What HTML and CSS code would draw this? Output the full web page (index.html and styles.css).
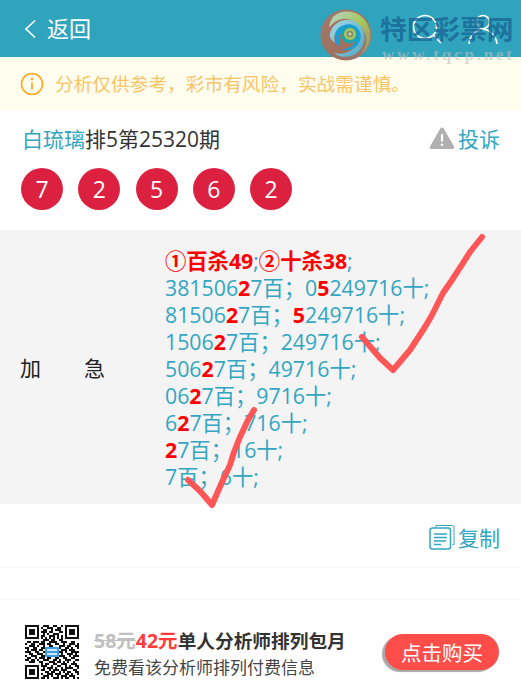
FILE: index.html
```html
<!DOCTYPE html>
<html lang="zh-CN">
<head>
    <meta charset="UTF-8">
    <meta name="viewport" content="width=device-width, initial-scale=1.0">
    <title>排5第25320期</title>
    <link rel="stylesheet" href="styles.css">
</head>
<body>
    <div class="page">
        <header class="top-bar">
            <div class="back">
                <svg class="back-arrow" width="12" height="20" viewBox="0 0 12 20"><path d="M11 1.5 2 10l9 8.5" fill="none" stroke="#fff" stroke-width="1.6"/></svg>
                <span>返回</span>
            </div>
            <div class="top-icons">
                <svg width="32" height="32" viewBox="0 0 32 32"><circle cx="13" cy="13" r="11.5" fill="none" stroke="#fff" stroke-width="1.6"/><path d="M21 21l8 8" stroke="#fff" stroke-width="1.6"/></svg>
                <svg width="32" height="32" viewBox="0 0 32 32"><circle cx="16" cy="8" r="6.5" fill="none" stroke="#fff" stroke-width="1.6"/><path d="M2 30c1-9 7-14 14-15 7 1 13 6 14 15" fill="none" stroke="#fff" stroke-width="1.6"/></svg>
            </div>
        </header>

        <div class="notice">
            <svg width="24" height="24" viewBox="0 0 24 24"><circle cx="12" cy="12" r="10.5" fill="none" stroke="#ffa726" stroke-width="1.6"/><path d="M12 10.5v7" stroke="#ffa726" stroke-width="1.8"/><circle cx="12" cy="7.2" r="1.2" fill="#ffa726"/></svg>
            <span>分析仅供参考，彩市有风险，实战需谨慎。</span>
        </div>

        <section class="issue">
            <div class="issue-head">
                <h1 class="issue-title"><span class="teal">白琉璃</span>排5第25320期</h1>
                <a class="complain">
                    <svg width="26" height="24" viewBox="0 0 26 24"><path d="M13 1.5c.8 0 1.3.4 1.700 1L25 20.500c.7 1.300 0 2.500-1.500 2.500h-21C1 23 .3 21.800 1 20.500L11.300 2.500c.4-.6.9-1 1.700-1z" fill="#b0b0b0"/><path d="M13 8v7.500" stroke="#fff" stroke-width="2.200"/><circle cx="13" cy="18.800" r="1.300" fill="#fff"/></svg>
                    <span>投诉</span>
                </a>
            </div>
            <div class="balls">
                <span class="ball">7</span>
                <span class="ball">2</span>
                <span class="ball">5</span>
                <span class="ball">6</span>
                <span class="ball">2</span>
            </div>
        </section>

        <section class="plan">
            <div class="plan-label"><span>加</span><span>急</span></div>
            <div class="plan-body">
                <p class="kill"><b>①百杀49</b><i>;</i><b>②十杀38</b><i>;</i></p>
                <p>381506<b>2</b>7百；0<b>5</b>249716十;</p>
                <p>81506<b>2</b>7百；<b>5</b>249716十;</p>
                <p>1506<b>2</b>7百；249716十;</p>
                <p>506<b>2</b>7百；49716十;</p>
                <p>06<b>2</b>7百；9716十;</p>
                <p>6<b>2</b>7百；716十;</p>
                <p><b>2</b>7百；16十;</p>
                <p>7百；6十;</p>
            </div>
        </section>

        <div class="copy-row">
            <a class="copy">
                <svg width="26" height="26" viewBox="0 0 26 26" fill="none" stroke="#33a6c2"><path d="M7 3.500V1.500h16.500a1.500 1.500 0 0 1 1.500 1.500v17.500h-1.500" stroke-width="1"/><rect x="1" y="4" width="20.500" height="21" rx="2.500" stroke-width="1.500"/><path d="M5 10h13M5 13.500h13M5 17h12M5 20.500h7" stroke-width="1.700"/></svg>
                <span>复制</span>
            </a>
        </div>

        <div class="gap-row"></div>

        <footer class="promo">
            <svg class="qr" width="54" height="54" viewBox="0 0 27 27">
                <path fill="none" stroke="#111" d="M0 .5h7M20 .5h7M0 1.500h1M6 1.500h1M20 1.500h1M26 1.500h1M0 2.500h1M6 2.500h1M20 2.500h1M26 2.500h1M0 3.500h1M6 3.500h1M20 3.500h1M26 3.500h1M0 4.500h1M6 4.500h1M20 4.500h1M26 4.500h1M0 5.500h1M6 5.500h1M20 5.500h1M26 5.500h1M0 6.500h7M20 6.500h7M0 20.500h7M0 21.500h1M6 21.500h1M0 22.500h1M6 22.500h1M0 23.500h1M6 23.500h1M0 24.500h1M6 24.500h1M0 25.500h1M6 25.500h1M0 26.500h7"/>
                <path fill="#111" d="M2 2h3v3H2zM22 2h3v3h-3zM2 22h3v3H2z"/>
                <path fill="none" stroke="#111" d="M9 .5h3M14 .5h2M18 .5h1M8 1.500h1M11 1.500h3M16 1.500h2M9 2.500h2M13 2.500h1M15 2.500h3M8 3.500h3M12 3.500h2M17 3.500h2M9 4.500h1M11 4.500h1M14 4.500h3M8 5.500h2M12 5.500h3M16 5.500h1M18 5.500h1M8 6.500h1M10 6.500h1M12 6.500h1M14 6.500h1M16 6.500h1M18 6.500h1M9 7.500h3M13 7.500h2M17 7.500h2M1 8.500h2M4 8.500h3M8 8.500h2M12 8.500h4M18 8.500h3M23 8.500h2M0 9.500h1M3 9.500h2M7 9.500h3M11 9.500h2M15 9.500h2M19 9.500h1M22 9.500h3M26 9.500h1M2 10.500h3M6 10.500h1M9 10.500h1M12 10.500h2M17 10.500h3M21 10.500h2M25 10.500h2M0 11.500h2M4 11.500h2M8 11.500h2M17 11.500h1M20 11.500h2M23 11.500h1M26 11.500h1M1 12.500h1M3 12.500h3M7 12.500h2M18 12.500h3M22 12.500h3M0 13.500h3M5 13.500h2M9 13.500h1M17 13.500h2M20 13.500h1M23 13.500h4M2 14.500h2M6 14.500h3M18 14.500h1M21 14.500h3M25 14.500h1M0 15.500h1M3 15.500h3M8 15.500h2M17 15.500h3M22 15.500h1M24 15.500h3M1 16.500h2M5 16.500h1M7 16.500h3M11 16.500h2M15 16.500h2M19 16.500h2M23 16.500h2M0 17.500h2M3 17.500h2M6 17.500h1M9 17.500h3M14 17.500h2M17 17.500h1M20 17.500h3M25 17.500h2M2 18.500h3M7 18.500h2M12 18.500h3M16 18.500h2M19 18.500h1M21 18.500h1M24 18.500h1M8 19.500h1M10 19.500h2M14 19.500h2M18 19.500h3M23 19.500h3M8 20.500h3M13 20.500h1M16 20.500h2M20 20.500h1M22 20.500h1M25 20.500h2M9 21.500h1M11 21.500h3M15 21.500h1M18 21.500h1M20 21.500h4M26 21.500h1M8 22.500h2M12 22.500h1M14 22.500h3M18 22.500h3M24 22.500h2M10 23.500h2M13 23.500h2M17 23.500h1M19 23.500h1M21 23.500h2M25 23.500h2M8 24.500h1M11 24.500h3M15 24.500h3M20 24.500h2M23 24.500h1M26 24.500h1M9 25.500h3M13 25.500h1M16 25.500h1M18 25.500h3M22 25.500h3M8 26.500h2M11 26.500h1M14 26.500h3M18 26.500h1M20 26.500h2M24 26.500h1M26 26.500h1"/>
                <rect x="10" y="11" width="7" height="5" rx=".6" fill="#3a9fe0"/>
                <path d="M11 12.500h5M11 14.500h5" stroke="#fff" stroke-width=".7"/>
            </svg>
            <div class="promo-text">
                <div class="promo-title"><s>58元</s><em>42元</em>单人分析师排列包月</div>
                <div class="promo-sub">免费看该分析师排列付费信息</div>
            </div>
            <button class="buy" type="button">点击购买</button>
        </footer>
    </div>

    <!-- watermark laid over the header -->
    <div class="watermark">
        <svg class="wm-logo" width="52" height="52" viewBox="0 0 52 52">
            <defs>
                <linearGradient id="wmOuter" x1="0" y1="0" x2="1" y2="1">
                    <stop offset="0" stop-color="#a3786a"/>
                    <stop offset=".6" stop-color="#a0705e"/>
                    <stop offset="1" stop-color="#8f7d80"/>
                </linearGradient>
                <linearGradient id="wmGreen" x1="0" y1="0" x2="1" y2="1">
                    <stop offset="0" stop-color="#b7d4cf"/>
                    <stop offset=".5" stop-color="#a6c95a"/>
                    <stop offset="1" stop-color="#9c8a70"/>
                </linearGradient>
                <linearGradient id="wmBlue" x1="0" y1="0" x2="1" y2="1">
                    <stop offset="0" stop-color="#a4d6e2"/>
                    <stop offset="1" stop-color="#4fa9c8"/>
                </linearGradient>
            </defs>
            <circle cx="26" cy="26" r="25.500" fill="url(#wmOuter)"/>
            <path d="M13 8C25-3 46 3 50 22c2 11-3 20-10 24 4-5 7-11 6-18C44 17 33 8 22 10 17 11 12 14 9 19c0-4 2-8 4-11z" fill="url(#wmGreen)"/>
            <path d="M10 24C13 14 24 8 34 12c9 4 12 13 10 21-2 7-7 12-13 14-7 2-14 0-17-3 7 2 16 0 21-6 5-7 4-15-2-19-7-4-15-1-18 6-1 3-1 6 0 9-4-3-6-6-5-10z" fill="url(#wmBlue)"/>
            <path d="M18 37c-5-6-4-15 2-19 7-5 17-3 20 5 2 6 0 12-6 16-4 2-8 3-12 1 7 0 14-4 14-11 0-6-5-10-10-8-5 1-8 7-6 12 0 2-1 3-2 4z" fill="#1a9fd4"/>
            <circle cx="29.500" cy="26" r="8.500" fill="#1ea3a8"/>
            <circle cx="30" cy="25" r="6" fill="#a9c265"/>
            <circle cx="30" cy="25" r="3.300" fill="#7f8f6c"/>
            <circle cx="30" cy="25" r="1.500" fill="#d4d6a0"/>
        </svg>
        <div class="wm-text">
            <div class="wm-name">特区彩票网</div>
            <div class="wm-url">www.tqcp.net</div>
        </div>
    </div>

    <!-- hand drawn ticks over the plan text -->
    <svg class="ticks" width="521" height="689" viewBox="0 0 521 689" fill="none" stroke="#ff5757" stroke-width="6" stroke-linecap="round" stroke-linejoin="round">
        <path d="M482 237 470 252 463 263 452 280 443 293 432 315 425 327 410 350 393 370 380 358 362 337"/>
        <path d="M254 410 248 420 240 437 234 452 230 465 222 482 212 505 200 491 188 480"/>
    </svg>
</body>
</html>
```

FILE: styles.css
```css
* {
    box-sizing: border-box;
}

body {
    margin: 0;
    padding: 0;
    background: #ffffff;
    font-family: "Open Sans", "Noto Sans CJK SC", sans-serif;
    color: #333333;
}

.page {
    width: 521px;
    height: 689px;
    overflow: hidden;
}

.top-bar {
    display: flex;
    justify-content: space-between;
    align-items: center;
    height: 57px;
    padding: 0 22px 0 24px;
    background: #30a4bd;
    color: #ffffff;
}

.back {
    display: flex;
    align-items: center;
    gap: 11px;
    font-size: 22px;
}

.back span {
    margin-top: -3px;
}

.top-icons {
    display: flex;
    gap: 23px;
    margin-top: 2px;
}

.notice {
    display: flex;
    align-items: center;
    gap: 11px;
    height: 53px;
    padding-left: 20px;
    background: #fffdee;
    color: #f8c468;
    font-size: 18.700px;
}

.notice span {
    margin-top: -2px;
}

.issue {
    height: 120px;
    padding: 13px 21px 0;
}

.issue-head {
    display: flex;
    justify-content: space-between;
    align-items: center;
    height: 30px;
}

.issue-title {
    margin: 0 0 0 1px;
    font-size: 21px;
    font-weight: 400;
    color: #333333;
}

.teal {
    color: #33a6c2;
}

.complain {
    display: flex;
    align-items: center;
    gap: 3px;
    color: #33a6c2;
    font-size: 21px;
}

.balls {
    display: flex;
    gap: 15.300px;
    margin-top: 15px;
}

.ball {
    display: flex;
    justify-content: center;
    align-items: center;
    width: 42px;
    height: 42px;
    border-radius: 50%;
    background: #dc2140;
    color: #ffffff;
    font-size: 23px;
}

.plan {
    display: flex;
    align-items: center;
    height: 274px;
    background: #f4f4f4;
}

.plan-label {
    display: flex;
    justify-content: space-between;
    width: 85px;
    margin-left: 20px;
    font-size: 21px;
    color: #222222;
}

.plan-body {
    margin-left: 60px;
    padding-top: 2px;
    color: #33a6c2;
    font-size: 21.300px;
    line-height: 27px;
}

.plan-body p {
    margin: 0;
    white-space: nowrap;
}

.plan-body b {
    color: #ff0000;
    font-weight: 700;
}

.plan-body i {
    font-style: normal;
}

.copy-row {
    display: flex;
    justify-content: flex-end;
    align-items: center;
    height: 64px;
    padding-right: 21px;
    border-bottom: 1px solid #f8f8f8;
}

.copy {
    display: flex;
    align-items: center;
    gap: 3px;
    margin-top: 2px;
    color: #33a6c2;
    font-size: 21px;
}

.gap-row {
    height: 32px;
    border-bottom: 1px solid #f8f8f8;
}

.promo {
    display: flex;
    align-items: flex-start;
    padding: 25px 21px 0 25px;
}

.qr {
    flex: none;
}

.promo-text {
    width: 292px;
    margin: 2px 0 0 15px;
}

.promo-title {
    font-size: 18.700px;
    font-weight: 700;
    line-height: 27px;
    white-space: nowrap;
}

.promo-title s {
    font-size: 19.500px;
    color: #c0c0c0;
}

.promo-title em {
    font-size: 19.500px;
    color: #ff3b3b;
    font-style: normal;
}

.promo-sub {
    font-size: 17px;
    line-height: 28px;
    white-space: nowrap;
    color: #444444;
}

.buy {
    flex: none;
    width: 114px;
    height: 36px;
    margin: 9px 0 0 -1px;
    padding: 0;
    border: none;
    border-radius: 18px;
    background: #ff4d4a;
    box-shadow: -3px 2px 1px #a8a8a8;
    color: #ffffff;
    font-family: inherit;
    font-size: 20.500px;
}

.watermark {
    position: absolute;
    top: 9px;
    left: 320px;
    display: flex;
    gap: 8px;
}

.wm-text {
    width: 134px;
    margin-top: 4px;
}

.wm-name {
    font-size: 26.700px;
    font-weight: 700;
    line-height: 32px;
    color: rgba(24, 100, 150, 0.8);
    white-space: nowrap;
}

.wm-url {
    margin: 1px 0 0 2px;
    font-family: "Liberation Serif", serif;
    font-size: 17px;
    font-weight: 700;
    line-height: 18px;
    letter-spacing: 2.800px;
    color: rgba(190, 190, 190, 0.6);
    white-space: nowrap;
}

.ticks {
    position: absolute;
    top: 0;
    left: 0;
    pointer-events: none;
}
```
